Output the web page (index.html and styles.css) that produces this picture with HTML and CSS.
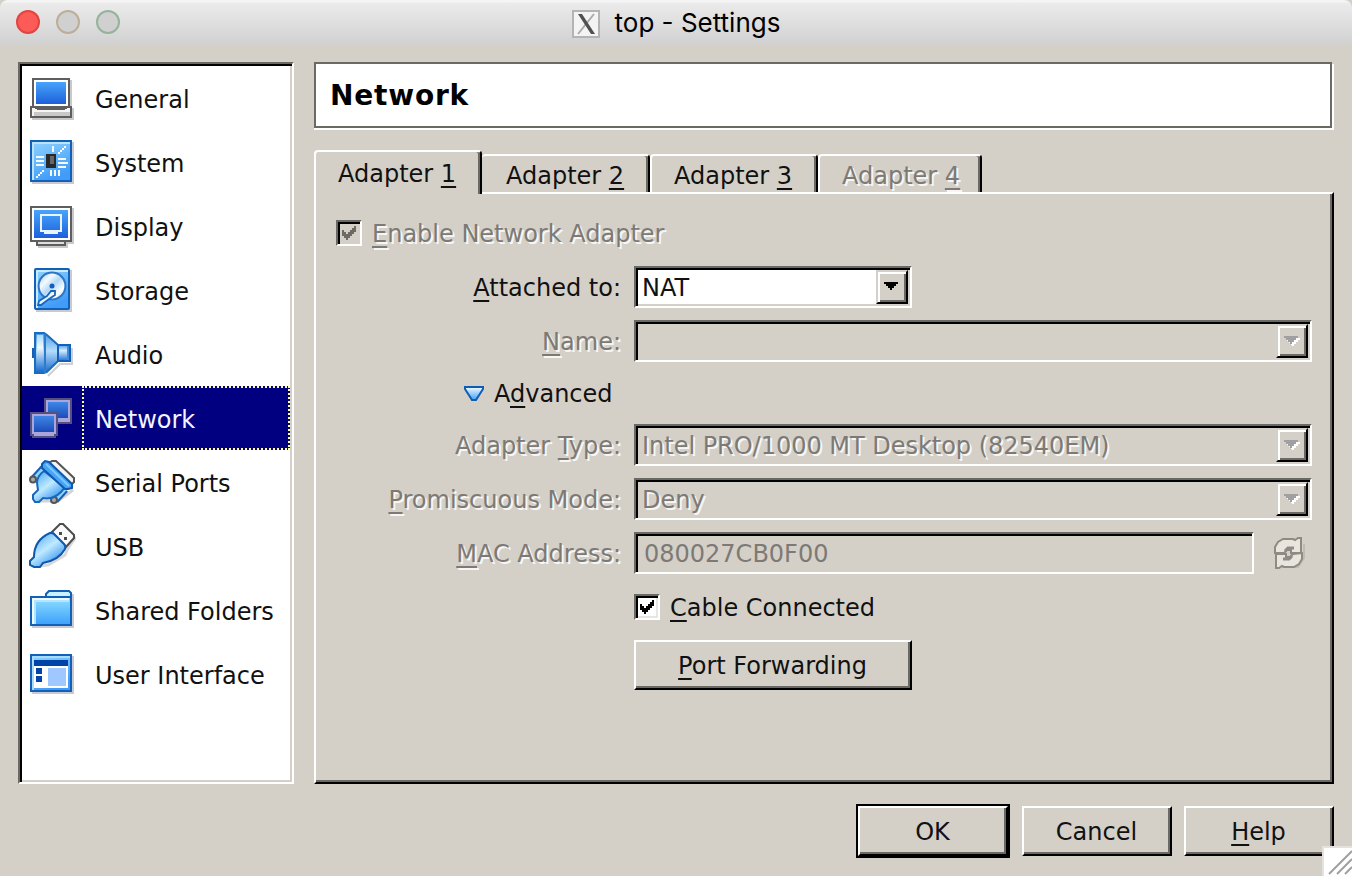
FILE: index.html
```html
<!DOCTYPE html>
<html lang="en">
<head>
<meta charset="utf-8">
<title>top - Settings</title>
<link rel="stylesheet" href="styles.css">
</head>
<body>
<div class="window">
  <header class="titlebar">
    <div class="lights"><i class="light close"></i><i class="light min"></i><i class="light max"></i></div>
    <div class="title">
      <svg class="xicon" width="28" height="28" viewBox="0 0 28 28"><rect x="1" y="1" width="26" height="26" fill="#f4f4f4" stroke="#b4b4b4" stroke-width="2"/><path d="M22 4 6 24" stroke="#aaa" stroke-width="2"/><path d="M6 4h4l13 20h-4z" fill="#505050"/></svg>
      <span class="title-text">top - Settings</span>
    </div>
  </header>
  <main class="body">
    <nav class="list">
      <div class="item"><svg class="ico" viewBox="0 0 48 64" shape-rendering="crispEdges"><path d="M42 14h2v28h2v12H4v-2h40V42h-2z" fill="#c9c9cd"/><rect x="5" y="13" width="36" height="28" fill="#fff" stroke="#5e5e5e" stroke-width="2"/><rect x="8" y="16" width="30" height="22" fill="url(#screen)"/><path d="M3 41h4l3 2h26l3-2h4v10H3z" fill="#f5f5f5" stroke="#5e5e5e" stroke-width="2"/><path d="M6 46h36v4H6z" fill="#c8c8c8"/></svg><span>General</span></div>
      <div class="item"><svg class="ico" viewBox="0 0 48 64" shape-rendering="crispEdges"><path d="M4 12h42v42H4z" fill="#c9c9d2"/><rect x="3" y="11" width="40" height="40" fill="url(#sky)" stroke="#1260b8" stroke-width="2"/><path d="M4 12h38v2H6v36H4z" fill="#b9e4ff"/><path d="M18 24h10v14H18z" fill="#292929"/><path d="M22 26h4v8h-4z" fill="#666"/><path d="M8 27h8M8 31h8M8 35h8M30 29h8M30 33h10M30 37h8M25 16v6M23 40v6M27 40v6M31 40v6" stroke="#f2faff" stroke-width="2"/><path d="M30 22h2v-2h2v-2h2v-2h2v2h-2v2h-2v2h-2v2h-2zM8 46h2v-2h2v-2h2v-2h2v2h-2v2h-2v2h-2v2H8z" fill="#fff"/></svg><span>System</span></div>
      <div class="item"><svg class="ico" viewBox="0 0 48 64" shape-rendering="crispEdges"><path d="M44 14h2v36h-6v4H10v-2h28v-4h6z" fill="#c9c9cd"/><rect x="9" y="47" width="28" height="4" fill="#ddd" stroke="#5e5e5e" stroke-width="2"/><rect x="3" y="13" width="40" height="34" fill="#fff" stroke="#5e5e5e" stroke-width="2"/><rect x="6" y="16" width="34" height="28" fill="url(#screen)"/><path d="M13 21h20v16H13zM16 39h14" fill="none" stroke="#e8f4ff" stroke-width="2"/></svg><span>Display</span></div>
      <div class="item"><svg class="ico" viewBox="0 0 48 64"><path d="M8 12h36v42H8z" fill="#c9c9d2"/><rect x="7" y="11" width="34" height="40" rx="1" fill="url(#sky)" stroke="#1260b8" stroke-width="2"/><path d="M9 50V13h31" fill="none" stroke="#c8ecff" stroke-width="2"/><circle cx="24" cy="28" r="13.4" fill="url(#disc)" stroke="#2b77c4" stroke-width="2"/><circle cx="24" cy="28" r="2.500" fill="#1260b8"/><path d="m11 43 8-5 4-5h4v4l-6 4-8 6h-3z" fill="#eaf6ff" stroke="#1b66ba" stroke-width="1.800"/></svg><span>Storage</span></div>
      <div class="item"><svg class="ico" viewBox="0 0 48 64"><path d="M20 54 32 42h12V26" fill="none" stroke="#cfcfd4" stroke-width="2"/><path d="M4 26h3v10H4z" fill="#1260b8"/><path d="M7 11h9l3 2 11 10v16L19 50l-3 1H7z" fill="url(#cone)" stroke="#1c6cbc" stroke-width="2"/><path d="M9 13h6v36H9z" fill="url(#conelip)"/><path d="M17 12v39" stroke="#2c7cc8" stroke-width="2"/><path d="M30 23h12v16H30z" fill="url(#cone2)" stroke="#1260b8" stroke-width="2"/><path d="M40 24v14" stroke="#3c8ce0" stroke-width="2"/></svg><span>Audio</span></div>
      <div class="item selected"><svg class="ico" viewBox="0 0 48 64" shape-rendering="crispEdges"><rect x="17" y="13" width="26" height="24" fill="#aaa6dc" stroke="#54507f" stroke-width="2"/><rect x="20" y="16" width="20" height="16" fill="url(#net)"/><path d="M3 27h26v22h-2v2H5v-2H3z" fill="#aaa6dc" stroke="#54507f" stroke-width="2"/><rect x="6" y="30" width="20" height="16" fill="url(#net)"/></svg><span>Network</span></div>
      <div class="item"><svg class="ico" viewBox="0 0 48 64"><path d="M10 51h20l15-11" fill="none" stroke="#d4d4d8" stroke-width="3"/><path d="m21 13 3-2h4l18 17v4l-3 3z" fill="#f4f4f4" stroke="#555" stroke-width="2"/><path d="m6 29 11-12" stroke="#165fb4" stroke-width="8"/><path d="m7 28 10-11" stroke="#8fd4ff" stroke-width="4"/><path d="M27 50l10-11" stroke="#165fb4" stroke-width="8"/><path d="m28 49 9-10" stroke="#8fd4ff" stroke-width="4"/><circle cx="5" cy="29.500" r="3" fill="#aaa" stroke="#555" stroke-width="2"/><circle cx="26" cy="50" r="3" fill="#aaa" stroke="#555" stroke-width="2"/><path d="M16 21Q9 26 9 33l1 7-5 5v4l2 3h4l4-4q10 2 18-6l4-5z" fill="url(#plug)" stroke="#1668bc" stroke-width="2"/><path d="m14 14 3-3 4 1 23 22v4l-4 1h-3L14 18z" fill="#48a4f4" stroke="#0f58ae" stroke-width="2"/><path d="m18 14 23 22" stroke="#7cc8ff" stroke-width="2"/></svg><span>Serial Ports</span></div>
      <div class="item"><svg class="ico" viewBox="0 0 48 64"><path d="m10 52 10-1 17-10 3-7 8-11" fill="none" stroke="#d8d8dc" stroke-width="3"/><path d="m24 18 8-8h3l11 11v3l-8 9z" fill="#fafafa" stroke="#4c4c4c" stroke-width="2"/><path d="M31 18h3v3h-3zM36 23h3v3h-3z" fill="#4c4c4c"/><path d="M22 19q2-.5 4 1l10 10q2 2 1 5-6 11-22 14l-3 4H6l-4-2v-4l4-4Q6 26 22 19z" fill="url(#plug)" stroke="#0f58ae" stroke-width="2"/></svg><span>USB</span></div>
      <div class="item"><svg class="ico" viewBox="0 0 48 64"><path d="M44 16h2v34H4v-2h40z" fill="#c9c9d2"/><path d="M18 20v-4l3-3h20l2 2v6z" fill="#c8f2ff" stroke="#1260b8" stroke-width="2"/><rect x="3" y="19" width="40" height="28" fill="url(#folder)" stroke="#1260b8" stroke-width="2"/><path d="M5 46V21h36" fill="none" stroke="#eafaff" stroke-width="2"/><path d="M7 46V23h34" fill="none" stroke="#b4e6ff" stroke-width="2"/></svg><span>Shared Folders</span></div>
      <div class="item"><svg class="ico" viewBox="0 0 48 64" shape-rendering="crispEdges"><path d="M4 14h42v38H4z" fill="#c9c9d2"/><rect x="3" y="13" width="40" height="36" fill="url(#sky)" stroke="#1260b8" stroke-width="2"/><path d="M4 14h38v2H6v32H4z" fill="#a8dcff"/><path d="M6 18h34v6H6z" fill="#0044a8"/><path d="M6 24h34v22H6z" fill="#fff"/><path d="M8 26h6v6H8zM8 34h6v6H8z" fill="#0044a8"/><path d="M20 26h18v18H20z" fill="#9ec8ff"/></svg><span>User Interface</span></div>
    </nav>
    <section class="content">
      <h1 class="heading">Network</h1>
      <div class="tabs">
        <div class="tab active">Adapter <u>1</u></div>
        <div class="tab second">Adapter <u>2</u></div>
        <div class="tab">Adapter <u>3</u></div>
        <div class="tab last off">Adapter <u>4</u></div>
      </div>
      <div class="panel">
        <div class="enable off"><span class="check dim"><svg width="18" height="18" viewBox="0 0 9 9" shape-rendering="crispEdges"><path d="M1 3h1v1h1v1h1V4h1V3h1V2h1V1h1v3H7v1H6v1H5v1H4v1H3V7H2V6H1z" fill="#6c6a66"/></svg></span><span class="caption"><u>E</u>nable Network Adapter</span></div>
        <div class="form">
          <label class="label"><u>A</u>ttached to:</label>
          <div class="combo short"><span>NAT</span><i class="drop"><svg width="16" height="10" viewBox="0 0 8 5" shape-rendering="crispEdges"><path d="M0 0h7v1H6v1H5v1H4v1H3V3H2V2H1V1H0z" fill="#000"/></svg></i></div>
          <label class="label off"><u>N</u>ame:</label>
          <div class="combo off"><span></span><i class="drop"><svg width="16" height="10" viewBox="0 0 8 5" shape-rendering="crispEdges"><path d="M1 2h5V1h2v1H7v1H6v1H5v1H4z" fill="#fff"/><path d="M0 0h7v1H6v1H5v1H4v1H3V3H2V2H1V1H0z" fill="#a09fa2"/></svg></i></div>
          <div class="advanced"><svg width="20" height="18" viewBox="0 0 20 18"><path d="M1 2h18v2l-7 11H8L1 4z" fill="url(#tri)" stroke="#0f5cb4" stroke-width="2"/></svg><span>A<u>d</u>vanced</span></div>
          <label class="label off">Adapter <u>T</u>ype:</label>
          <div class="combo off"><span>Intel PRO/1000 MT Desktop (82540EM)</span><i class="drop"><svg width="16" height="10" viewBox="0 0 8 5" shape-rendering="crispEdges"><path d="M1 2h5V1h2v1H7v1H6v1H5v1H4z" fill="#fff"/><path d="M0 0h7v1H6v1H5v1H4v1H3V3H2V2H1V1H0z" fill="#a09fa2"/></svg></i></div>
          <label class="label off"><u>P</u>romiscuous Mode:</label>
          <div class="combo off"><span>Deny</span><i class="drop"><svg width="16" height="10" viewBox="0 0 8 5" shape-rendering="crispEdges"><path d="M1 2h5V1h2v1H7v1H6v1H5v1H4z" fill="#fff"/><path d="M0 0h7v1H6v1H5v1H4v1H3V3H2V2H1V1H0z" fill="#a09fa2"/></svg></i></div>
          <label class="label off"><u>M</u>AC Address:</label>
          <div class="macrow"><div class="mac">080027CB0F00</div><svg width="32" height="34" viewBox="0 0 32 34"><path d="M30 8v14l-6 9H8" fill="none" stroke="#c0bcb3" stroke-width="2"/><path d="M1 17V11l3-5 5-3h10l2 1 3-2h3v15H17v-3h-4l-3 3z" fill="#e8e5de" stroke="#8f8b82" stroke-width="2"/><path d="M28 17v6l-3 5-5 3H10l-2-1-3 2H2V18h10v3h4l3-3z" fill="#e8e5de" stroke="#8f8b82" stroke-width="2"/><path d="M11 15l3-3h6M18 20l-3 3H9" fill="none" stroke="#8f8b82" stroke-width="3"/></svg></div>
        </div>
        <div class="cable"><span class="check"><svg width="18" height="18" viewBox="0 0 9 9" shape-rendering="crispEdges"><path d="M1 3h1v1h1v1h1V4h1V3h1V2h1V1h1v3H7v1H6v1H5v1H4v1H3V7H2V6H1z" fill="#000"/></svg></span><span class="caption"><u>C</u>able Connected</span></div>
        <button class="btn port"><u>P</u>ort Forwarding</button>
      </div>
    </section>
  </main>
  <footer class="actions">
    <button class="btn ok">OK</button><button class="btn">Cancel</button><button class="btn"><u>H</u>elp</button>
  </footer>
  <svg class="grip" width="30" height="30" viewBox="0 0 30 30"><path d="M0 0h30v30H0z" fill="#e4e2de"/><path d="M2 2h28v28H2z" fill="#fff"/><path d="M7 28 30 5M15 28 30 13M23 28l7-7" stroke="#a0a0a0" stroke-width="2"/></svg>
</div>
<svg class="defs" width="0" height="0">
  <defs>
    <linearGradient id="screen" x1="0" y1="0" x2="0" y2="1"><stop offset="0" stop-color="#48a4fc"/><stop offset="1" stop-color="#1c60da"/></linearGradient>
    <linearGradient id="sky" x1="0" y1="0" x2=".4" y2="1"><stop offset="0" stop-color="#92d4ff"/><stop offset="1" stop-color="#409cf8"/></linearGradient>
    <linearGradient id="folder" x1="0" y1="0" x2="0" y2="1"><stop offset="0" stop-color="#90e0ff"/><stop offset="1" stop-color="#3ca0fc"/></linearGradient>
    <linearGradient id="net" x1="0" y1="0" x2="0" y2="1"><stop offset="0" stop-color="#3e86e6"/><stop offset="1" stop-color="#1c4cb8"/></linearGradient>
    <linearGradient id="disc" x1="0" y1="0" x2="1" y2="1"><stop offset="0" stop-color="#9cc8f4"/><stop offset=".3" stop-color="#f4faff"/><stop offset=".5" stop-color="#b4d8f8"/><stop offset=".75" stop-color="#fff"/><stop offset="1" stop-color="#98c8f8"/></linearGradient>
    <linearGradient id="cone" x1="0" y1="0" x2="0" y2="1"><stop offset="0" stop-color="#4898e8"/><stop offset=".45" stop-color="#b4dcfc"/><stop offset="1" stop-color="#1668cc"/></linearGradient>
    <linearGradient id="cone2" x1="0" y1="0" x2="0" y2="1"><stop offset="0" stop-color="#4c9cec"/><stop offset=".35" stop-color="#d4ecff"/><stop offset="1" stop-color="#2070d0"/></linearGradient>
    <linearGradient id="conelip" x1="0" y1="0" x2="0" y2="1"><stop offset="0" stop-color="#a8d8fc"/><stop offset=".35" stop-color="#f0faff"/><stop offset="1" stop-color="#1c70d4"/></linearGradient>
    <linearGradient id="plug" x1=".2" y1=".1" x2=".8" y2=".9"><stop offset="0" stop-color="#60b4f8"/><stop offset=".45" stop-color="#c0eaff"/><stop offset="1" stop-color="#2c90f0"/></linearGradient>
    <linearGradient id="tri" x1="0" y1="0" x2="0" y2="1"><stop offset="0" stop-color="#f4fcff"/><stop offset="1" stop-color="#40a0f4"/></linearGradient>
  </defs>
</svg>
</body>
</html>
```
FILE: styles.css
```css
* { box-sizing: border-box; }
body { margin: 0; background: #d4d0c8; font-family: "DejaVu Sans", sans-serif; font-size: 24px; line-height: 28px; color: #111; white-space: nowrap; overflow: hidden; }
svg { display: block; flex: none; }
.defs { position: absolute; }
u { text-decoration: underline; text-decoration-thickness: 2px; text-underline-offset: 4px; text-decoration-skip-ink: none; }
.window { position: relative; width: 1352px; height: 876px; display: flex; flex-direction: column; background: #d4d0c8; }
.titlebar { height: 46px; flex: none; display: grid; grid-template-columns: 1fr auto 1fr; align-items: center; background: linear-gradient(#f5f5f5 0 2px, #ebebeb 3px, #d2d2d2 43px, #d4d0c8 46px); border-radius: 8px 8px 0 0; }
.lights { display: flex; gap: 16px; padding-left: 16px; }
.light { width: 24px; height: 24px; margin-top: -2px; border-radius: 50%; border: 2px solid; }
.close { background: #fc5b57; border-color: #e2443f; }
.min { background: #d0d0d0; border-color: #bcae98; }
.max { background: #d0d0d0; border-color: #94b39a; }
.title { display: flex; gap: 15px; align-items: center; color: #000; }
.xicon { margin-top: 2px; }
.title-text { font-family: Inter, sans-serif; font-size: 26px; }
.body { display: flex; gap: 20px; padding: 16px 18px 0; height: 738px; }
.list { width: 276px; flex: none; background: #fff; border: 2px solid; border-color: #6b6963 #fff #fff #6b6963; box-shadow: inset 2px 2px #000, inset -2px -2px #d4d0c8; padding: 2px; }
.item { height: 64px; display: flex; align-items: center; padding-left: 6px; }
.item span { height: 64px; padding-top: 20px; margin-left: 6px; padding-left: 13px; flex: 1; }
.ico { width: 48px; height: 64px; }
.selected { background: #000080; color: #f4f4ff; }
.selected span { border: 2px dotted #ffffa8; padding: 18px 0 0 11px; }
.content { width: 1020px; flex: none; display: flex; flex-direction: column; }
.heading { margin: 0; width: 1018px; height: 66px; flex: none; padding: 16px 0 0 14px; border: 2px solid #6b6963; background: #fff; box-shadow: 2px 2px #fff, 0 2px #fff; font-size: 28px; letter-spacing: .8px; line-height: 32px; color: #000; }
.tabs { display: flex; align-items: flex-end; height: 64px; position: relative; }
.tab { width: 168px; height: 38px; padding: 6px 0 0 22px; border-top: 2px solid #fff; border-left: 2px solid #fff; border-right: 2px solid #000; box-shadow: inset -2px 0 #6b6963; border-radius: 4px 4px 0 0; }
.tab.active { height: 44px; margin-bottom: -2px; padding-top: 8px; position: relative; background: #d4d0c8; }
.tab.second { border-left: 0; padding-left: 24px; }
.tab.last { width: 164px; }
.panel { flex: 1; border: 2px solid; border-color: #fff #000 #000 #fff; box-shadow: inset -2px -2px #6b6963; padding: 26px 0 0 20px; }
.off { color: #7d7a75; text-shadow: 2px 2px #f7f6f4; }
.enable, .cable { display: flex; gap: 10px; align-items: center; height: 26px; }
.caption { padding-top: 2px; }
.check { width: 26px; height: 26px; padding: 2px; background: #fff; border: 2px solid; border-color: #6b6963 #fff #fff #6b6963; box-shadow: inset 2px 2px #000, inset -2px -2px #e8e6e2; }
.check.dim { background: #d4d0c8; box-shadow: inset 2px 2px #000; }
.form { display: grid; grid-template-columns: 286px 678px; column-gap: 12px; margin-top: 20px; grid-template-rows: 42px 42px 38px 42px 42px 42px; row-gap: 12px; align-items: center; }
.label { text-align: right; padding: 2px 1px 0 0; }
.combo { height: 42px; display: flex; justify-content: space-between; border: 2px solid; border-color: #6b6963 #fff #fff #6b6963; box-shadow: inset 2px 2px #000, inset -2px -2px #d4d0c8; padding: 2px; background: #d4d0c8; }
.combo span { padding: 4px 0 0 4px; letter-spacing: -.02px; }
.short { width: 278px; background: #fff; }
.drop { width: 32px; height: 34px; padding: 10px 0 0 6px; background: #d4d0c8; border: 2px solid; border-color: #d4d0c8 #000 #000 #d4d0c8; box-shadow: inset 2px 2px #fff, inset -2px -2px #6b6963; }
.advanced { grid-column: 1 / 3; display: flex; gap: 10px; align-items: center; padding: 2px 0 0 128px; }
.macrow { display: flex; justify-content: space-between; align-items: center; padding-right: 6px; }
.mac { width: 620px; height: 42px; border: 2px solid; border-color: #6b6963 #fff #fff #6b6963; box-shadow: inset 2px 2px #000; padding: 6px 0 0 8px; color: #7d7a75; }
.cable { margin: 20px 0 0 298px; }
.btn { font: inherit; color: #111; height: 50px; width: 150px; padding: 2px 1px 0 0; border: 2px solid; border-color: #fff #000 #000 #fff; box-shadow: inset -2px -2px #6b6963; background: #d4d0c8; }
.port { display: block; width: 278px; margin: 20px 0 0 298px; }
.actions { display: flex; gap: 12px; justify-content: flex-end; align-items: center; padding: 22px 18px 0; }
.ok { outline: 2px solid #000; margin-right: 2px; }
.grip { position: absolute; right: 0; bottom: 0; }
```
